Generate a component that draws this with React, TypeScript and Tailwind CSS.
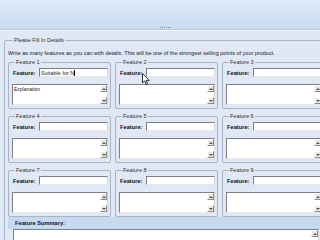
import React from "react";

function ScrollBtn({ dir }: { dir: "up" | "down" }) {
  return (
    <div className="w-[7px] h-[7px] bg-[#ece9e2] border border-t-[#ffffff] border-l-[#ffffff] border-r-[#8a8a8a] border-b-[#8a8a8a] flex items-center justify-center">
      <svg width="4" height="2" viewBox="0 0 4 2">
        {dir === "up" ? (
          <path d="M0 2 L2 0 L4 2 Z" fill="#555" />
        ) : (
          <path d="M0 0 L2 2 L4 0 Z" fill="#555" />
        )}
      </svg>
    </div>
  );
}

function TextArea({ text, h }: { text?: string; h: string }) {
  return (
    <div
      className={`${h} bg-white border border-t-[#7f7f7f] border-l-[#7f7f7f] border-r-[#d6d6d6] border-b-[#e8e8e8] flex`}
    >
      <div className="flex-1 px-[1px] pt-[1px] text-[5px] leading-[6px] text-[#222]">
        {text}
      </div>
      <div className="w-[7px] flex flex-col justify-between">
        <ScrollBtn dir="up" />
        <ScrollBtn dir="down" />
      </div>
    </div>
  );
}

function Feature({ n, value, explanation }: { n: number; value?: string; explanation?: string }) {
  return (
    <fieldset className="border border-[#a8b4c4] rounded-[2px] pl-[3px] pr-[2px] pb-[3px] min-w-0">
      <legend className="ml-[3px] px-[1px] text-[5.5px] leading-[6px] text-[#333]">
        Feature {n}
      </legend>
      <div className="flex items-center mt-[3px]">
        <span className="ml-[1px] w-[26px] text-[5.7px] leading-[6px] font-bold text-[#111]">
          Feature:
        </span>
        <div className="flex-1 h-[9px] bg-white border border-t-[#7f7f7f] border-l-[#7f7f7f] border-r-[#d6d6d6] border-b-[#e8e8e8] flex items-center pl-[1px] text-[5.5px] leading-[6px] text-[#222]">
          {value && (
            <>
              <span>{value}</span>
              <span className="w-[1px] h-[6px] bg-black" />
            </>
          )}
        </div>
      </div>
      <div className="mt-[7px]">
        <TextArea text={explanation} h="h-[21px]" />
      </div>
    </fieldset>
  );
}

export default function App() {
  return (
    <div className="w-[320px] h-[240px] overflow-hidden bg-[#dfe8f4] relative font-['Liberation_Sans',Arial,sans-serif]">
      <div className="h-[29px] bg-gradient-to-b from-[#dde9f8] to-[#c9dcf2] flex items-end pl-[160px] pb-[1px]">
        <div className="flex gap-[1px]">
          {Array.from({ length: 6 }).map((_, i) => (
            <div key={i} className="w-[1px] h-[1px] bg-[#7d8ea6]" />
          ))}
        </div>
      </div>
      <div className="h-px bg-[#b7c7db]" />
      <div className="h-px bg-[#f3f7fc]" />
      <div className="pl-[4px] pt-[6px]">
        <fieldset className="w-[330px] border border-[#a8b4c4] rounded-[2px] pl-[3px] pb-[4px]">
          <legend className="ml-[5px] px-[1px] text-[5.5px] leading-[6px] text-[#333]">
            Please Fill In Details
          </legend>
          <div className="mt-[7px] text-[5.5px] leading-[6px] text-[#222] whitespace-nowrap">
            Write as many features as you can with details. This will be one of the strongest selling points of your product.
          </div>
          <div className="mt-[3px] grid grid-cols-[103px_103px_103px] gap-x-[4px] gap-y-[4px]">
            <Feature n={1} value="Suitable for N" explanation="Explanation" />
            <Feature n={2} />
            <Feature n={3} />
            <Feature n={4} />
            <Feature n={5} />
            <Feature n={6} />
            <Feature n={7} />
            <Feature n={8} />
            <Feature n={9} />
          </div>
          <div className="bg-[#c6d9f1] h-[12px] flex items-center pl-[7px] text-[5.7px] leading-[6px] font-bold text-[#111]">
            Feature Summary:
          </div>
          <div className="pl-[5px] pr-[14px]">
            <TextArea h="h-[30px]" />
          </div>
        </fieldset>
      </div>
      <svg
        className="absolute left-[142px] top-[73px]"
        width="8"
        height="12"
        viewBox="0 0 8 12"
      >
        <path d="M0.5 0.5 L0.5 10 L2.7 7.8 L4.3 11.3 L5.6 10.7 L4.1 7.4 L7.2 7.4 Z" fill="#fff" stroke="#000" strokeWidth="0.8" />
      </svg>
    </div>
  );
}
